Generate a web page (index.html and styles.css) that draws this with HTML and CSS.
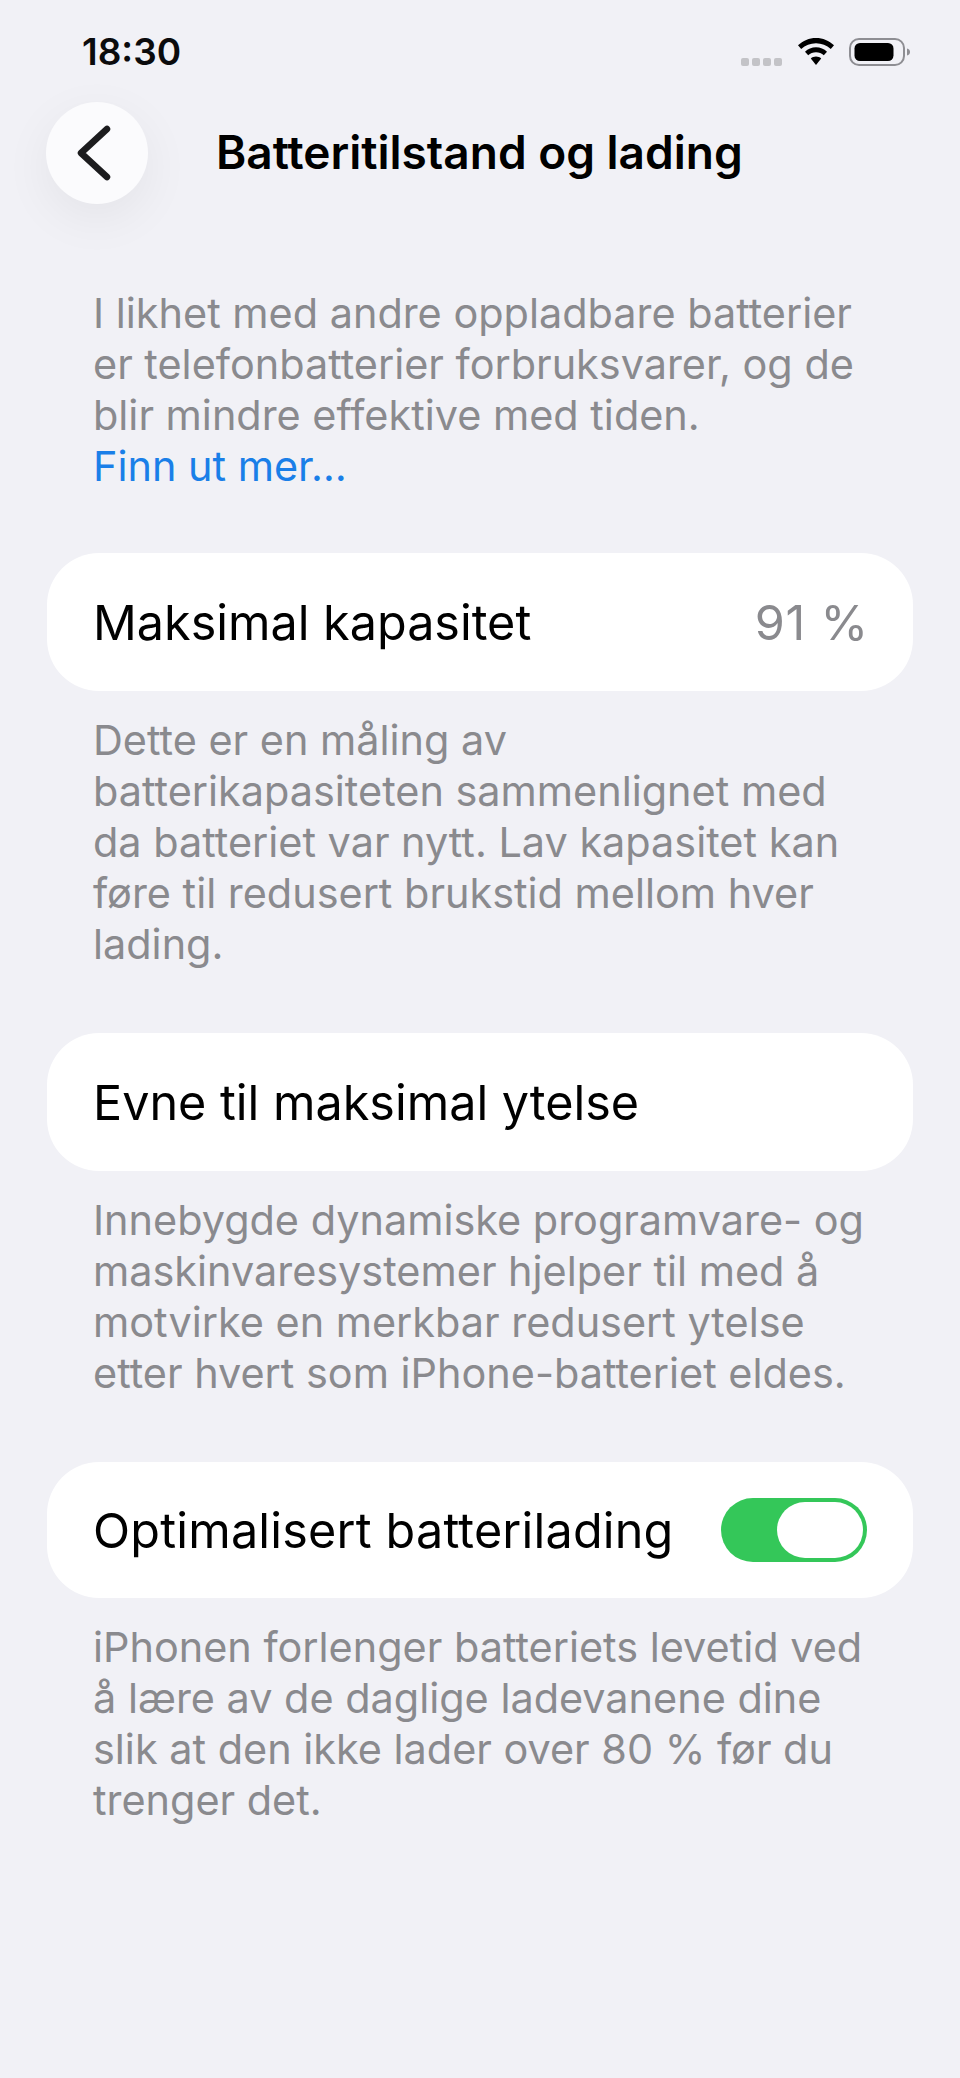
FILE: index.html
```html
<!DOCTYPE html>
<html lang="nb">
<head>
    <meta charset="UTF-8">
    <meta name="viewport" content="width=device-width, initial-scale=1.0">
    <title>Batteritilstand og lading</title>
    <link rel="stylesheet" href="styles.css">
</head>
<body>
    <div class="status-bar">
        <span class="time">18:30</span>
        <div class="status-icons">
            <div class="signal-dots"><span></span><span></span><span></span><span></span></div>
            <svg class="wifi" width="36" height="28" viewBox="0 0 36 28">
                <path d="M18 0C11 0 5 2.700 0 7.300L3.200 11C7.300 7.300 12.400 5.200 18 5.200S28.700 7.300 32.800 11L36 7.300C31 2.700 25 0 18 0Z" fill="#000"/>
                <path d="M18 9.300C13.800 9.300 9.900 10.900 7 13.700L10.200 17.300C12.300 15.400 15 14.300 18 14.300S23.700 15.400 25.800 17.300L29 13.700C26.100 10.900 22.200 9.300 18 9.300Z" fill="#000"/>
                <path d="M18 18.500C16 18.500 14.200 19.200 12.800 20.400L18 27L23.200 20.400C21.800 19.200 20 18.500 18 18.500Z" fill="#000"/>
            </svg>
            <svg class="battery" width="62" height="28" viewBox="0 0 62 28">
                <rect x="1" y="1" width="54" height="26" rx="9" fill="none" stroke="#8e8e93" stroke-width="2"/>
                <rect x="5.500" y="5" width="39" height="18" rx="5.500" fill="#000"/>
                <path d="M58 10.500C60 11 61 12.300 61 14S60 17 58 17.500Z" fill="#8e8e93"/>
            </svg>
        </div>
    </div>

    <header class="nav">
        <button class="back-btn" aria-label="Tilbake">
            <svg width="34" height="56" viewBox="0 0 34 56">
                <path d="M30 4L4 28L30 52" fill="none" stroke="#1c1c1e" stroke-width="6.500" stroke-linecap="round" stroke-linejoin="round"/>
            </svg>
        </button>
        <h1>Batteritilstand og lading</h1>
    </header>

    <main class="content">
        <p class="note intro">
            I likhet med andre oppladbare batterier<br>
            er telefonbatterier forbruksvarer, og de<br>
            blir mindre effektive med tiden.<br>
            <a href="#">Finn ut mer…</a>
        </p>

        <div class="card">
            <span>Maksimal kapasitet</span>
            <span class="value">91 %</span>
        </div>
        <p class="note">
            Dette er en måling av<br>
            batterikapasiteten sammenlignet med<br>
            da batteriet var nytt. Lav kapasitet kan<br>
            føre til redusert brukstid mellom hver<br>
            lading.
        </p>

        <div class="card">
            <span>Evne til maksimal ytelse</span>
        </div>
        <p class="note">
            Innebygde dynamiske programvare- og<br>
            maskinvaresystemer hjelper til med å<br>
            motvirke en merkbar redusert ytelse<br>
            etter hvert som iPhone-batteriet eldes.
        </p>

        <div class="card card-toggle">
            <span>Optimalisert batterilading</span>
            <div class="toggle"><div class="knob"></div></div>
        </div>
        <p class="note">
            iPhonen forlenger batteriets levetid ved<br>
            å lære av de daglige ladevanene dine<br>
            slik at den ikke lader over 80 % før du<br>
            trenger det.
        </p>
    </main>
</body>
</html>
```

FILE: styles.css
```css
* {
    margin: 0;
    padding: 0;
    box-sizing: border-box;
    font-family: Inter, 'Liberation Sans', sans-serif;
}

body {
    background: #f1f1f6;
    width: 960px;
    min-height: 2078px;
    overflow: hidden;
}

.status-bar {
    height: 102px;
    padding: 34px 49px 0 82px;
    display: flex;
    justify-content: space-between;
    align-items: flex-start;
}

.time {
    font-size: 37px;
    line-height: 36px;
    font-weight: 600;
    color: #0b0b0d;
}

.status-icons {
    display: flex;
    align-items: flex-start;
    margin-top: 4px;
}

.signal-dots {
    display: flex;
    gap: 3px;
    margin: 20px 16px 0 0;
}

.signal-dots span {
    width: 8px;
    height: 8px;
    border-radius: 2px;
    background: #c3c3c7;
}

.wifi {
    margin-right: 15px;
}

.nav {
    height: 102px;
    padding-left: 46px;
    display: flex;
    align-items: center;
}

.back-btn {
    width: 102px;
    height: 102px;
    border: none;
    border-radius: 50%;
    background: #fbfbfd;
    box-shadow: 0 14px 50px rgba(0, 0, 0, 0.06);
    display: flex;
    align-items: center;
    justify-content: center;
    padding-right: 6px;
}

.nav h1 {
    margin: -2px 0 0 68px;
    font-size: 46px;
    line-height: 52px;
    font-weight: 600;
    color: #000;
}

.content {
    padding: 84px 47px 0;
}

.note {
    padding: 0 46px;
    font-size: 41.400px;
    line-height: 51px;
    color: #8a8a8e;
    margin-bottom: 63px;
}

.note a {
    color: #1a7fe8;
    text-decoration: none;
}

.intro {
    margin-bottom: 61px;
}

.card {
    background: #fff;
    border-radius: 52px;
    height: 138px;
    padding: 0 46px;
    margin-bottom: 24px;
    display: flex;
    align-items: center;
    justify-content: space-between;
    font-size: 48.500px;
    color: #000;
}

.card-toggle {
    height: 136px;
    letter-spacing: 0.200px;
}

.value {
    color: #8a8a8e;
    letter-spacing: 0.800px;
    margin-right: -2px;
}

.toggle {
    width: 146px;
    height: 64px;
    border-radius: 32px;
    background: #34c759;
    display: flex;
    justify-content: flex-end;
    align-items: center;
    padding-right: 4px;
}

.knob {
    width: 86px;
    height: 56px;
    border-radius: 28px;
    background: #fff;
}
```
